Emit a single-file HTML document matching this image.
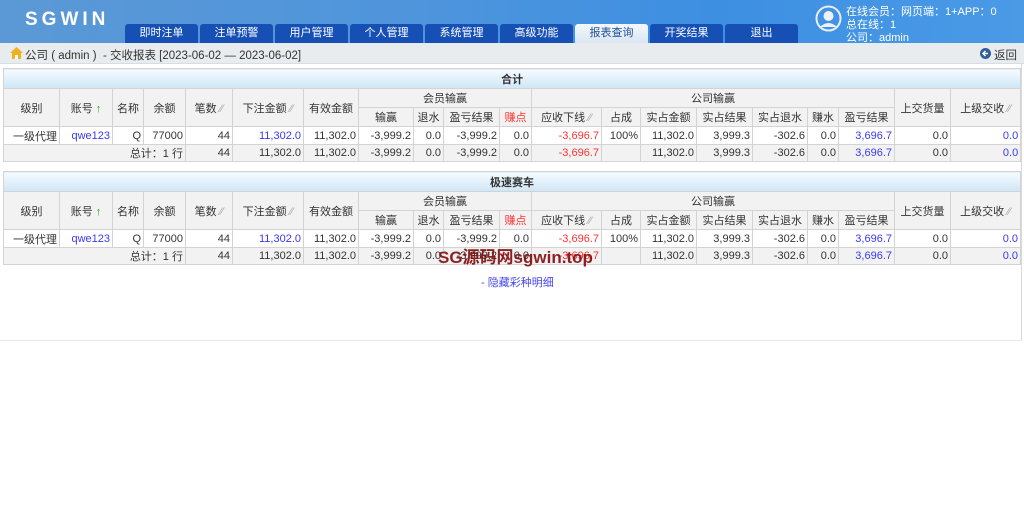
<!DOCTYPE html>
<html><head><meta charset="utf-8"><style>
*{margin:0;padding:0;box-sizing:border-box}
body{width:1024px;height:517px;background:#fff;font-family:"Liberation Sans","Noto Sans CJK SC",sans-serif;font-size:11px;color:#333;position:relative;overflow:hidden}
.hd{position:absolute;left:0;top:0;width:1024px;height:43px;background:linear-gradient(90deg,#5b98d6 0%,#4f95dc 40%,#3d8fe2 70%,#4a9ae6 100%)}
.logo{position:absolute;left:25px;top:9px;color:#fff;font-size:19px;font-weight:bold;letter-spacing:4px}
.tab{position:absolute;top:24px;width:73px;height:19px;background:#1650b5;color:#fff;text-align:center;line-height:19px;font-size:11px;border-radius:3px 3px 0 0}
.tab.on{background:linear-gradient(#f4f8fc,#d9e6f3);color:#1d4e96}
.uinfo{position:absolute;left:846px;top:6px;color:#fff;font-size:11px;line-height:13px}
.bc{position:absolute;left:0;top:43px;width:1024px;height:21px;background:#e9ecef;border-bottom:1px solid #d5dde6}
.bc span{position:absolute;top:4px;font-size:11.5px;color:#333}
.wrap{position:absolute;left:0;top:64px;width:1022px;height:277px;border-right:1px solid #d8d8d8;border-bottom:1px solid #e8e8e8}
table{position:absolute;left:3px;width:1017px;border-collapse:collapse;table-layout:fixed}
td,th{border:1px solid #d3d3d3;font-weight:normal;white-space:nowrap;overflow:hidden}
th{background:#f2f2f2;color:#333;text-align:center;height:19px}
td{text-align:right;padding-right:2px;height:18px;background:#fff}
tr.tot td{background:#f2f2f2;height:16px}
tr.ttl th{background:linear-gradient(#f5fbff,#cfe6f6);height:20px;font-weight:bold;color:#333}
.b{color:#3a3aee}.r{color:#f33}
.wm{position:absolute;left:438px;top:243px;font-size:17px;font-weight:bold;color:rgba(130,10,10,.9)}
.lk{position:absolute;left:481px;top:274px;color:#4646ee;font-size:11px}
</style></head><body>
<div class="hd">
<div class="logo">SGWIN</div>
<div class="tab" style="left:125px">即时注单</div>
<div class="tab" style="left:200px">注单预警</div>
<div class="tab" style="left:275px">用户管理</div>
<div class="tab" style="left:350px">个人管理</div>
<div class="tab" style="left:425px">系统管理</div>
<div class="tab" style="left:500px">高级功能</div>
<div class="tab on" style="left:575px">报表查询</div>
<div class="tab" style="left:650px">开奖结果</div>
<div class="tab" style="left:725px">退出</div>
<svg style="position:absolute;left:815px;top:5px" width="27" height="27" viewBox="0 0 27 27"><circle cx="13.5" cy="13.5" r="12" fill="none" stroke="#e8eef6" stroke-width="2"/><circle cx="13.5" cy="11" r="5" fill="#eef2f8"/><path d="M5 22 Q13.5 14 22 22" fill="#eef2f8"/></svg>
<div class="uinfo">在线会员：网页端：1+APP：0<br>总在线：1<br>公司：admin</div>
</div>
<div class="bc">
<svg style="position:absolute;left:10px;top:4px" width="13" height="12" viewBox="0 0 13 12"><path d="M6.5 0 L13 6 L11 6 L11 12 L2 12 L2 6 L0 6 Z" fill="#f0b020"/><rect x="5" y="8" width="3" height="4" fill="#fff"/></svg>
<span style="left:25px">公司 ( admin ) &nbsp;- 交收报表 [2023-06-02 — 2023-06-02]</span>
<svg style="position:absolute;left:980px;top:5px" width="11" height="11" viewBox="0 0 11 11"><circle cx="5.5" cy="5.5" r="5.5" fill="#2f5f9e"/><path d="M8 5.5H3.5M5.5 3L3 5.5L5.5 8" stroke="#fff" stroke-width="1.5" fill="none"/></svg>
<span style="left:994px">返回</span>
</div>
<div class="wrap"></div>
<table style="top:68px">
<colgroup><col style="width:56px"><col style="width:53px"><col style="width:31px"><col style="width:42px"><col style="width:47px"><col style="width:71px"><col style="width:55px"><col style="width:55px"><col style="width:30px"><col style="width:56px"><col style="width:32px"><col style="width:70px"><col style="width:39px"><col style="width:56px"><col style="width:56px"><col style="width:55px"><col style="width:31px"><col style="width:56px"><col style="width:56px"><col style="width:70px"></colgroup>
<tr class="ttl"><th colspan="20">合计</th></tr>
<tr><th rowspan="2">级别</th><th rowspan="2">账号 <span style="color:#2a2">↑</span></th><th rowspan="2">名称</th><th rowspan="2">余额</th><th rowspan="2">笔数 <span style="color:#aaa">⁄⁄</span></th><th rowspan="2">下注金额 <span style="color:#aaa">⁄⁄</span></th><th rowspan="2">有效金额</th><th colspan="4">会员输赢</th><th colspan="7">公司输赢</th><th rowspan="2">上交货量</th><th rowspan="2">上级交收 <span style="color:#aaa">⁄⁄</span></th></tr>
<tr><th>输赢</th><th>退水</th><th>盈亏结果</th><th class="r">赚点</th><th>应收下线 <span style="color:#aaa">⁄⁄</span></th><th>占成</th><th>实占金额</th><th>实占结果</th><th>实占退水</th><th>赚水</th><th>盈亏结果</th></tr>
<tr><td>一级代理</td><td class="b">qwe123</td><td>Q</td><td>77000</td><td>44</td><td class="b">11,302.0</td><td>11,302.0</td><td>-3,999.2</td><td>0.0</td><td>-3,999.2</td><td>0.0</td><td class="r">-3,696.7</td><td>100%</td><td>11,302.0</td><td>3,999.3</td><td>-302.6</td><td>0.0</td><td class="b">3,696.7</td><td>0.0</td><td class="b">0.0</td></tr>
<tr class="tot"><td colspan="4">总计：1 行</td><td>44</td><td>11,302.0</td><td>11,302.0</td><td>-3,999.2</td><td>0.0</td><td>-3,999.2</td><td>0.0</td><td class="r">-3,696.7</td><td></td><td>11,302.0</td><td>3,999.3</td><td>-302.6</td><td>0.0</td><td class="b">3,696.7</td><td>0.0</td><td class="b">0.0</td></tr>
</table>
<table style="top:171px">
<colgroup><col style="width:56px"><col style="width:53px"><col style="width:31px"><col style="width:42px"><col style="width:47px"><col style="width:71px"><col style="width:55px"><col style="width:55px"><col style="width:30px"><col style="width:56px"><col style="width:32px"><col style="width:70px"><col style="width:39px"><col style="width:56px"><col style="width:56px"><col style="width:55px"><col style="width:31px"><col style="width:56px"><col style="width:56px"><col style="width:70px"></colgroup>
<tr class="ttl"><th colspan="20">极速赛车</th></tr>
<tr><th rowspan="2">级别</th><th rowspan="2">账号 <span style="color:#2a2">↑</span></th><th rowspan="2">名称</th><th rowspan="2">余额</th><th rowspan="2">笔数 <span style="color:#aaa">⁄⁄</span></th><th rowspan="2">下注金额 <span style="color:#aaa">⁄⁄</span></th><th rowspan="2">有效金额</th><th colspan="4">会员输赢</th><th colspan="7">公司输赢</th><th rowspan="2">上交货量</th><th rowspan="2">上级交收 <span style="color:#aaa">⁄⁄</span></th></tr>
<tr><th>输赢</th><th>退水</th><th>盈亏结果</th><th class="r">赚点</th><th>应收下线 <span style="color:#aaa">⁄⁄</span></th><th>占成</th><th>实占金额</th><th>实占结果</th><th>实占退水</th><th>赚水</th><th>盈亏结果</th></tr>
<tr><td>一级代理</td><td class="b">qwe123</td><td>Q</td><td>77000</td><td>44</td><td class="b">11,302.0</td><td>11,302.0</td><td>-3,999.2</td><td>0.0</td><td>-3,999.2</td><td>0.0</td><td class="r">-3,696.7</td><td>100%</td><td>11,302.0</td><td>3,999.3</td><td>-302.6</td><td>0.0</td><td class="b">3,696.7</td><td>0.0</td><td class="b">0.0</td></tr>
<tr class="tot"><td colspan="4">总计：1 行</td><td>44</td><td>11,302.0</td><td>11,302.0</td><td>-3,999.2</td><td>0.0</td><td>-3,999.2</td><td>0.0</td><td class="r">-3,696.7</td><td></td><td>11,302.0</td><td>3,999.3</td><td>-302.6</td><td>0.0</td><td class="b">3,696.7</td><td>0.0</td><td class="b">0.0</td></tr>
</table>
<div class="wm">SG源码网sgwin.top</div>
<div class="lk">- 隐藏彩种明细</div>
</body></html>
